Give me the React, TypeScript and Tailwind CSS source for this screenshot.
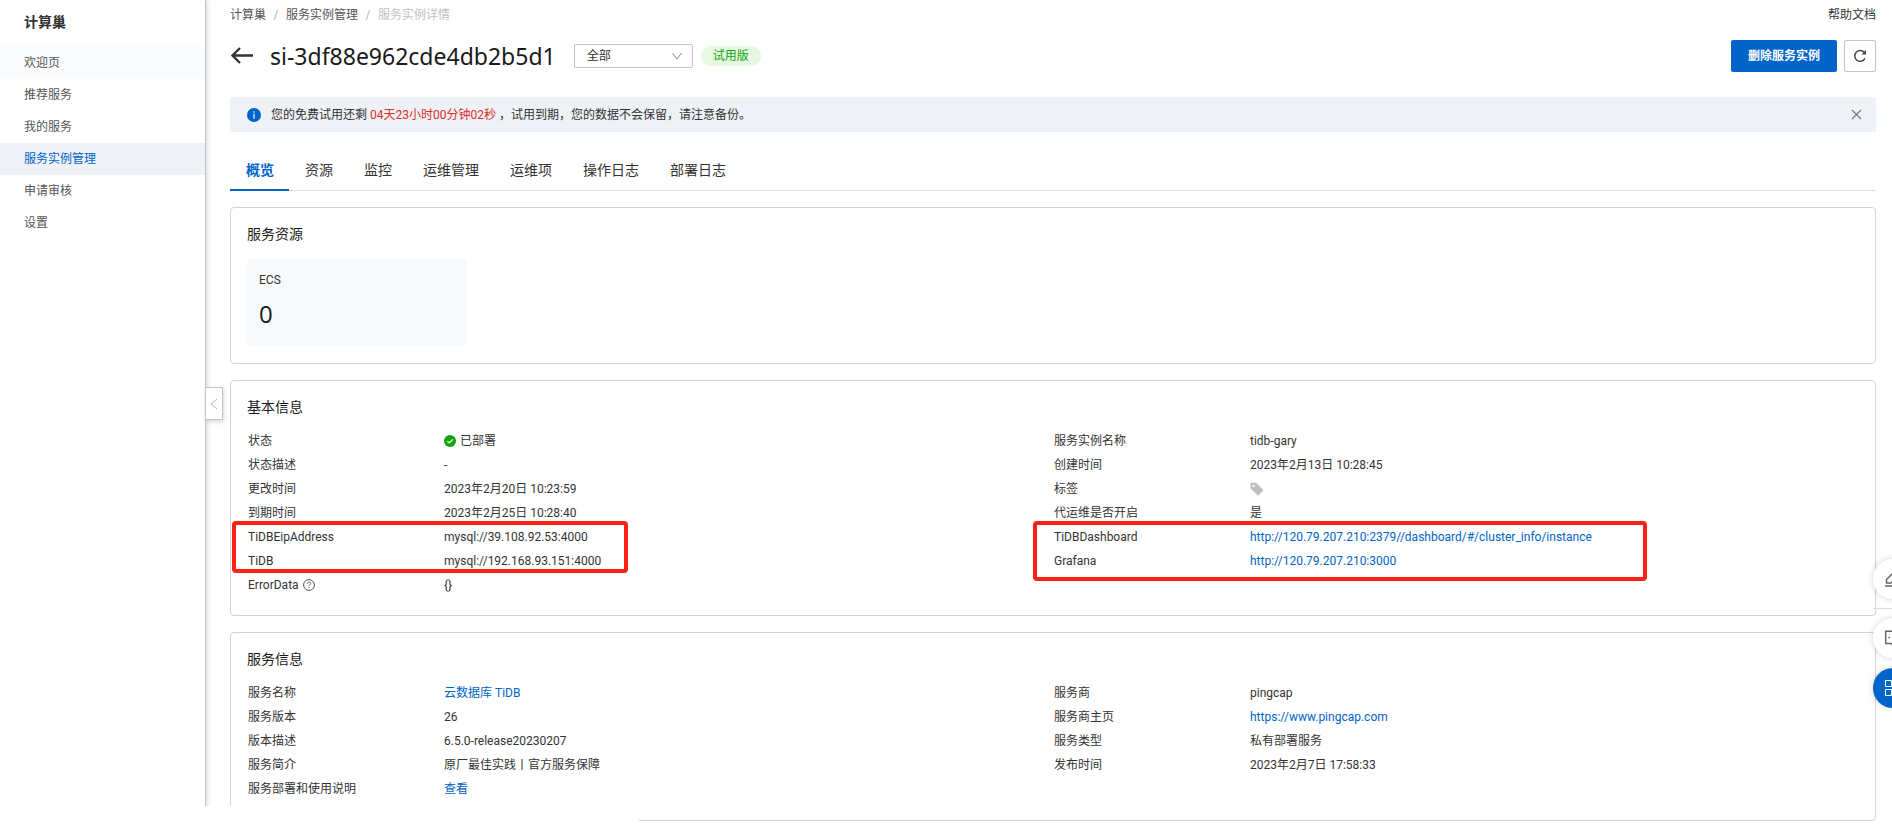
import { useState } from 'react';
import type { ReactNode } from 'react';

const LINK = 'text-[#0064c8] hover:underline';

const menu = ['欢迎页', '推荐服务', '我的服务', '服务实例管理', '申请审核', '设置'];
const tabs = ['概览', '资源', '监控', '运维管理', '运维项', '操作日志', '部署日志'];

type Row = { label: ReactNode; value: ReactNode };

const StatusIcon = () => (
  <svg className="size-3" viewBox="0 0 12 12" fill="none">
    <circle cx="6" cy="6" r="6" fill="#0ea50e" />
    <path d="M3.4 6.1l1.9 1.8 3.3-3.4" stroke="#fff" strokeWidth="1.3" />
  </svg>
);

const TagIcon = () => (
  <svg className="size-[14px]" viewBox="0 0 14 14">
    <path
      d="M1 .8h5.2L13 7.6a.8.8 0 0 1 0 1.1L8.700 13.200a.8.8 0 0 1-1.100 0L.4 6.200V1.400A.6.6 0 0 1 1 .8zM3.600 2.700a1.200 1.200 0 1 0 0 2.400 1.200 1.200 0 0 0 0-2.400z"
      fill="#bfbfbf"
      fillRule="evenodd"
    />
  </svg>
);

const HelpIcon = () => (
  <svg className="size-3" viewBox="0 0 12 12" fill="none" stroke="#555" strokeWidth="1">
    <circle cx="6" cy="6" r="5.4" />
    <path d="M4.300 4.800c0-2.300 3.400-2.200 3.400-.2 0 1.200-1.700 1.300-1.700 2.500M6 8.100v1.100" />
  </svg>
);

const basicLeft: Row[] = [
  { label: '状态', value: <><StatusIcon />已部署</> },
  { label: '状态描述', value: '-' },
  { label: '更改时间', value: '2023年2月20日 10:23:59' },
  { label: '到期时间', value: '2023年2月25日 10:28:40' },
  { label: 'TiDBEipAddress', value: 'mysql://39.108.92.53:4000' },
  { label: 'TiDB', value: 'mysql://192.168.93.151:4000' },
  { label: <>ErrorData<HelpIcon /></>, value: '{}' },
];

const basicRight: Row[] = [
  { label: '服务实例名称', value: 'tidb-gary' },
  { label: '创建时间', value: '2023年2月13日 10:28:45' },
  { label: '标签', value: <TagIcon /> },
  { label: '代运维是否开启', value: '是' },
  {
    label: 'TiDBDashboard',
    value: <a className={LINK} href="#dashboard">http://120.79.207.210:2379//dashboard/#/cluster_info/instance</a>,
  },
  { label: 'Grafana', value: <a className={LINK} href="#grafana">http://120.79.207.210:3000</a> },
];

const serviceLeft: Row[] = [
  { label: '服务名称', value: <a className={LINK} href="#service">云数据库 TiDB</a> },
  { label: '服务版本', value: '26' },
  { label: '版本描述', value: '6.5.0-release20230207' },
  { label: '服务简介', value: '原厂最佳实践丨官方服务保障' },
  { label: '服务部署和使用说明', value: <a className={LINK} href="#docs">查看</a> },
];

const serviceRight: Row[] = [
  { label: '服务商', value: 'pingcap' },
  { label: '服务商主页', value: <a className={LINK} href="#home">https://www.pingcap.com</a> },
  { label: '服务类型', value: '私有部署服务' },
  { label: '发布时间', value: '2023年2月7日 17:58:33' },
];

const InfoList = ({ rows }: { rows: Row[] }) => (
  <dl className="pl-px">
    {rows.map((row, index) => (
      <div key={index} className="flex h-6 items-center">
        <dt className="flex w-[196px] shrink-0 items-center gap-1">{row.label}</dt>
        <dd className="flex items-center gap-1 whitespace-nowrap">{row.value}</dd>
      </div>
    ))}
  </dl>
);

const Card = ({ title, children }: { title: string; children: ReactNode }) => (
  <section className="mb-4 rounded border border-[#d0d3d9] px-4 pt-[14px]">
    <h2 className="text-sm leading-6 text-[#1a1a1a]">{title}</h2>
    {children}
  </section>
);

const Sidebar = () => (
  <aside className="relative w-[206px] shrink-0 border-r border-[#c0c4cc] shadow-[2px_0_4px_rgba(0,0,0,0.12)]">
    <h1 className="pt-[10px] pb-[13px] pl-6 text-sm leading-6 font-bold">计算巢</h1>
    <nav>
      {menu.map((item, index) => (
        <a
          key={item}
          href="#menu"
          className={`block pl-6 leading-8 ${
            item === '服务实例管理' ? 'bg-[#eef1f6] text-[#0064c8]' : index === 0 ? 'bg-[#fafbfc] text-[#555]' : 'text-[#555]'
          }`}
        >
          {item}
        </a>
      ))}
    </nav>
    <button
      aria-label="收起"
      className="absolute top-[387px] left-[205px] flex h-[33px] w-[18px] items-center justify-center border border-[#c0c4cc] bg-white shadow-[1px_2px_4px_rgba(0,0,0,0.15)]"
    >
      <svg className="h-3 w-2" viewBox="0 0 8 12" fill="none" stroke="#b5b5b5">
        <path d="M7 1L1 6l6 5" />
      </svg>
    </button>
  </aside>
);

// Round shortcuts that peek in from the right edge of the window
const FloatingTools = () => (
  <div className="fixed top-[559px] -right-[21px] flex w-10 flex-col">
    <button aria-label="编辑" className="flex size-10 items-center justify-center rounded-full bg-white shadow-[0_0_6px_rgba(0,0,0,0.18)]">
      <svg className="size-[18px]" viewBox="0 0 18 18" fill="none" stroke="#666" strokeWidth="1.500">
        <path d="M2.500 13V9.500L10 2l4 4-7 7zM1 16h16" />
      </svg>
    </button>
    <div className="my-[9px] h-px bg-[#dcdcdc]" />
    <button aria-label="咨询" className="mb-[10px] flex size-10 items-center justify-center rounded-full bg-white shadow-[0_0_6px_rgba(0,0,0,0.18)]">
      <svg className="size-[18px]" viewBox="0 0 18 18" fill="none" stroke="#666" strokeWidth="1.500">
        <path d="M7 14.500H1.700V2.200h14.600v12.300H11L9 16.500z" />
        <path d="M4.500 8.500H6M8.200 8.500h1.500M11.900 8.500h1.500" />
      </svg>
    </button>
    <button aria-label="应用" className="flex size-10 items-center justify-center rounded-full bg-[#0064c8] shadow-[0_0_6px_rgba(0,0,0,0.18)]">
      <svg className="size-4" viewBox="0 0 16 16" fill="none" stroke="#fff">
        <path d="M.5.500h6v6h-6zM9.500.500h6v6h-6zM.5 9.500h6v6h-6zM9.500 9.500h6v6h-6z" />
      </svg>
    </button>
  </div>
);

const App = () => {
  const [tab, setTab] = useState('概览');

  return (
    <div className="relative flex min-h-screen bg-white font-['Roboto','Noto_Sans_CJK_SC',sans-serif] text-xs text-[#333]">
      <Sidebar />

      <main className="min-w-0 flex-1 pr-4 pl-6">
        <div className="flex items-center justify-between pt-[3px] leading-6">
          <nav className="flex">
            <a href="#root" className="text-[#555]">计算巢</a>
            <span className="w-5 text-center text-[#b0b0b0]">/</span>
            <a href="#list" className="text-[#555]">服务实例管理</a>
            <span className="w-5 text-center text-[#b0b0b0]">/</span>
            <span className="text-[#c1c1c1]">服务实例详情</span>
          </nav>
          <a href="#help">帮助文档</a>
        </div>

        <header className="mt-[13px] flex h-8 items-center">
          <button aria-label="返回" className="mr-4">
            <svg className="h-[18px] w-6" viewBox="0 0 24 18" fill="none" stroke="#333" strokeWidth="2.400">
              <path d="M23 8.500H2.500M10 1L2.500 8.500 10 16" />
            </svg>
          </button>
          <h2 className="font-['Noto_Sans',sans-serif] text-[23px] leading-8 text-[#1a1a1a]">si-3df88e962cde4db2b5d1</h2>
          <div className="relative ml-[18px]">
            <select aria-label="范围" className="h-6 w-[119px] appearance-none rounded-xs border border-[#c0c4cc] bg-white pl-3">
              <option>全部</option>
            </select>
            <svg className="pointer-events-none absolute top-2 right-[11px] h-2 w-[10px]" viewBox="0 0 10 8" fill="none" stroke="#888">
              <path d="M.5 1L5 7l4.500-6" />
            </svg>
          </div>
          <span className="ml-2 rounded-full bg-[#e6f8e2] px-3 leading-5 text-[#0ea50e]">试用版</span>
          <button className="ml-auto h-8 rounded-xs bg-[#0064c8] px-[17px] font-bold text-white">删除服务实例</button>
          <button aria-label="刷新" className="ml-[7px] flex size-8 items-center justify-center rounded-xs border border-[#c0c4cc]">
            <svg className="size-[14px]" viewBox="0 0 14 14" fill="none" stroke="#444" strokeWidth="1.500">
              <path d="M11.600 3.800A5.400 5.400 0 1 0 12 9.300" />
              <path d="M13 1v4.500H8.500z" fill="#444" stroke="none" />
            </svg>
          </button>
        </header>

        <div className="mt-[25px] flex h-[35px] items-center rounded-xs bg-[#eef1f6] pr-[14px] pl-[17px]">
          <svg className="mr-[10px] size-[14px]" viewBox="0 0 14 14">
            <circle cx="7" cy="7" r="7" fill="#0064c8" />
            <path d="M7 3.300v1.400M7 5.800v5" stroke="#fff" strokeWidth="1.200" />
          </svg>
          <p>
            您的免费试用还剩 <span className="text-[#d93026]">04天23小时00分钟02秒</span> ，试用到期，您的数据不会保留，请注意备份。
          </p>
          <button aria-label="关闭" className="ml-auto">
            <svg className="size-[11px]" viewBox="0 0 11 11" fill="none" stroke="#777" strokeWidth="1.200">
              <path d="M1 1l9 9M10 1l-9 9" />
            </svg>
          </button>
        </div>

        <div role="tablist" className="mt-[19px] mb-4 flex border-b border-[#e0e0e0] text-sm">
          {tabs.map((item) => (
            <button
              key={item}
              role="tab"
              aria-selected={item === tab}
              onClick={() => setTab(item)}
              className={`-mb-px h-10 border-b-2 pr-[15px] pl-4 ${
                item === tab ? 'border-[#0064c8] font-bold text-[#0064c8]' : 'border-transparent'
              }`}
            >
              {item}
            </button>
          ))}
        </div>

        <Card title="服务资源">
          <div className="mt-[13px] mb-[17px] h-[87px] w-[220px] rounded bg-[#f7f9fb] px-3 pt-[11px]">
            <p className="leading-5">ECS</p>
            <p className="mt-2 font-['Open_Sans',sans-serif] text-2xl leading-8 text-[#1a1a1a]">0</p>
          </div>
        </Card>

        <Card title="基本信息">
          <div className="relative mt-[10px] grid grid-cols-2 pb-[18px]">
            <InfoList rows={basicLeft} />
            <InfoList rows={basicRight} />
            <div className="pointer-events-none absolute top-[92px] -left-[15px] h-[52px] w-[396px] rounded border-4 border-[#ff2016]" />
            <div className="pointer-events-none absolute top-[92px] left-1/2 -ml-[20px] h-[60px] w-[614px] rounded border-4 border-[#ff2016]" />
          </div>
        </Card>

        <Card title="服务信息">
          <div className="mt-[10px] grid grid-cols-2 pb-[19px]">
            <InfoList rows={serviceLeft} />
            <InfoList rows={serviceRight} />
          </div>
        </Card>
      </main>

      <FloatingTools />
      {/* Browser status strip */}
      <div className="fixed bottom-0 left-0 h-[19px] w-[639px] bg-white" />
    </div>
  );
};

export default App;
